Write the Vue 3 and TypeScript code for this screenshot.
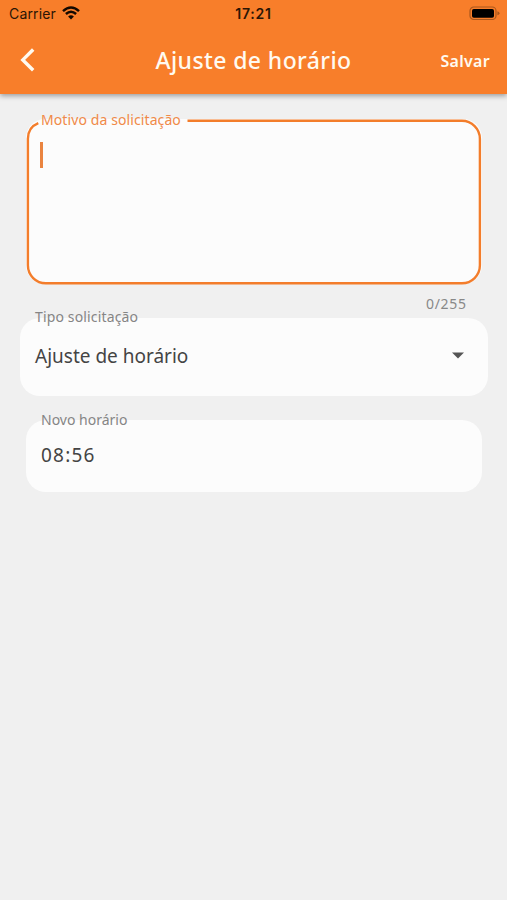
<script setup lang="ts">
import { computed, ref } from 'vue'

const reason = ref('')
const maxLength = 255
const requestType = ref('Ajuste de horário')
const newTime = ref('08:56')
const counter = computed(() => `${reason.value.length}/${maxLength}`)
</script>

<template>
  <div class="screen">
    <header class="header">
      <div class="status">
        <div class="carrier">
          <span class="carrier-name">Carrier</span>
          <svg class="wifi" viewBox="0 0 18 14" aria-hidden="true">
            <path d="M1 5.1Q9-2 17 5.1" />
            <path d="M3.9 8Q9 3.5 14.1 8" />
            <path class="solid" d="M6.1 10.4Q9 8 11.9 10.4L9 13.5Z" />
          </svg>
        </div>
        <span class="clock">17:21</span>
        <svg class="battery" viewBox="0 0 31 15" aria-hidden="true">
          <rect class="shell" x="1" y="1" width="26" height="12.5" rx="3.8" />
          <rect x="3" y="3" width="22" height="8.7" rx="1.8" />
          <path class="tip" d="M28.4 5.2Q30.5 5.7 30.5 7.2T28.4 9.3Z" />
        </svg>
      </div>
      <nav class="nav">
        <button class="back" aria-label="Voltar">
          <svg viewBox="0 0 16 26"><path d="M13.2 2.5L2.8 12.9L13.2 23.3" /></svg>
        </button>
        <h1 class="title">Ajuste de horário</h1>
        <button class="save">Salvar</button>
      </nav>
    </header>
    <main class="form">
      <section class="reason">
        <svg class="outline" viewBox="0 0 456 166" aria-hidden="true">
          <path d="M12.3 4.2C6 6.8 1.9 12.5 1.9 19.8V146.3A18 18 0 0 0 19.9 164.3H435.9A18 18 0 0 0 453.9 146.3V19.8A18 18 0 0 0 435.9 1.8H161.5" />
        </svg>
        <div class="reason-label"><span class="reason-text">Motivo da solicitação</span></div>
        <div class="caret"></div>
      </section>
      <div class="counter"><span class="counter-text">{{ counter }}</span></div>
      <section class="field type">
        <div class="label"><span class="type-label">Tipo solicitação</span></div>
        <div class="row">
          <span class="type-value">{{ requestType }}</span>
          <svg class="arrow" viewBox="0 0 12 7"><path d="M0 .5H12L6 6.5Z" /></svg>
        </div>
      </section>
      <section class="field time">
        <div class="label"><span class="time-label">Novo horário</span></div>
        <div class="row"><span class="time-value">{{ newTime }}</span></div>
      </section>
    </main>
  </div>
</template>

<style>
body { background: #f0f0f0; }
</style>

<style scoped>
.screen {
  height: 900px;
  overflow: hidden;
  background: #f0f0f0;
  color: #444;
  font-family: "Noto Sans", sans-serif;
}
.screen * { box-sizing: border-box; }
svg { display: block; }
span { white-space: nowrap; }
.header {
  height: 94px;
  background: #f87e2a;
  box-shadow: 0 2px 5px rgba(0, 0, 0, .35);
}
.status {
  display: grid;
  grid-template-columns: 1fr auto 1fr;
  align-items: center;
  height: 27px;
  padding: 0 7px 0 9px;
  color: #2b1505;
  font-family: Inter, sans-serif;
  font-size: 14px;
  line-height: 27px;
}
.carrier { display: flex; align-items: center; gap: 6px; }
.carrier-name { letter-spacing: .15px; }
.wifi { width: 18px; height: 14px; margin-top: -2px; fill: none; stroke: #140900; stroke-width: 2.5; }
.wifi .solid { fill: #140900; stroke: none; }
.clock { margin-right: 2px; font-weight: 600; letter-spacing: .8px; }
.battery { justify-self: end; width: 31px; height: 15px; margin-top: -1px; fill: #000; }
.battery .shell { fill: none; stroke: #a9571d; stroke-width: 1.2; }
.battery .tip { fill: #a9571d; }
.nav {
  display: grid;
  grid-template-columns: 1fr auto 1fr;
  align-items: center;
  height: 67px;
  padding: 0 17px 0 20px;
  color: #fffaf0;
}
button { padding: 0; border: 0; background: none; color: inherit; font: inherit; }
.back { width: 16px; height: 26px; margin-top: -2px; }
.back svg { width: 16px; height: 26px; fill: none; stroke: #fffaf0; stroke-width: 3.4; }
.title { margin: -2px 3px 0 0; font-size: 23px; line-height: 30px; font-weight: 500; letter-spacing: .4px; }
.save { justify-self: end; font-size: 16px; line-height: 24px; font-weight: 600; letter-spacing: .3px; }
.form { padding: 25px 19px 0 20px; }
.reason {
  position: relative;
  display: flow-root;
  height: 165px;
  margin: 0 6px;
  padding-left: 15px;
  border-radius: 19px;
  background: #fcfcfc;
}
.outline {
  position: absolute;
  inset: 0;
  width: 456px;
  height: 166px;
  fill: none;
  stroke: #f37d2b;
  stroke-width: 2.4;
}
.reason-label { height: 20px; margin-top: -9px; color: #f08a48; font-size: 14px; line-height: 20px; }
.reason-text { letter-spacing: .1px; }
.caret { width: 3px; height: 26px; margin: 12px 0 0 -1px; background: #ea8440; }
.counter {
  display: flex;
  justify-content: flex-end;
  height: 34px;
  padding: 10px 22px 0 0;
  color: #888;
  font-size: 14px;
  line-height: 20px;
}
.counter-text { margin-right: -.6px; letter-spacing: .65px; }
.field { border-radius: 20px; background: #fcfcfc; }
.label { height: 20px; margin-top: -11px; color: #858585; font-size: 14px; line-height: 20px; }
.type-label { letter-spacing: .15px; }
.row { display: flex; align-items: center; justify-content: space-between; margin-top: 1px; font-size: 19px; line-height: 26px; }
.type { display: flow-root; height: 78px; padding: 0 24px 0 15px; }
.type .row { height: 56px; }
.arrow { width: 12px; height: 7px; margin-top: -1px; fill: #555; }
.time { display: flow-root; height: 72px; margin: 24px 6px 0; padding: 0 15px; }
.time .label { margin-top: -10px; }
.time .row { height: 50px; margin-top: 0; }
.time-value { letter-spacing: 1.2px; }
</style>
